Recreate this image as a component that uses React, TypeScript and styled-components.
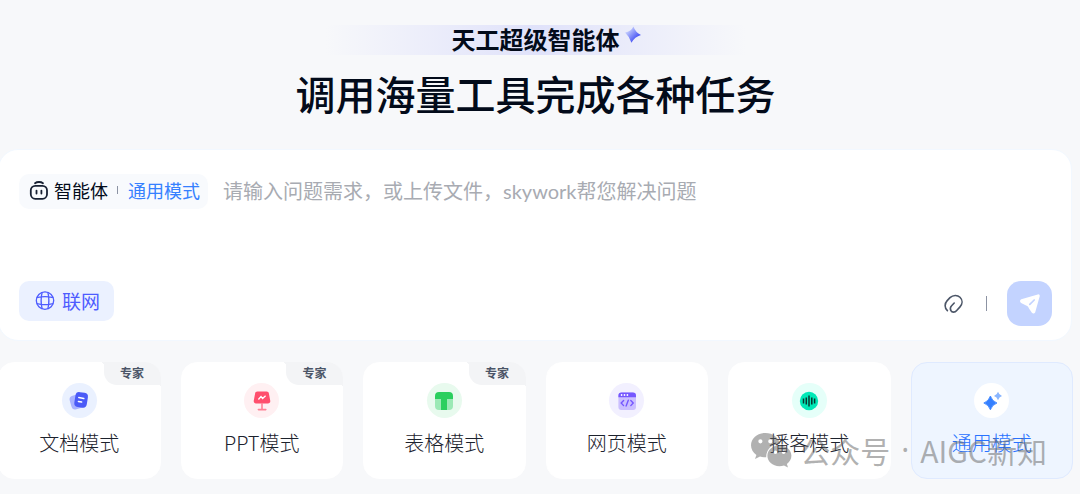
import React from "react";
import styled, { createGlobalStyle } from "styled-components";

const GlobalStyle = createGlobalStyle`
  * { box-sizing: border-box; }
  body {
    margin: 0;
    background: #f7f8fa;
    color: #2f3540;
    font-family: "Noto Sans CJK SC", sans-serif;
    overflow-x: hidden;
  }
  button, textarea { font: inherit; }
`;

const Page = styled.main`
  position: relative;
  padding: 25px 7px 15px 0;
  margin-left: -2px;
`;

const Header = styled.header`
  display: flex;
  flex-direction: column;
  align-items: center;
  gap: 8px;
  color: #030b1a;
`;

const Tagline = styled.p`
  display: flex;
  justify-content: center;
  width: 420px;
  height: 30px;
  margin: 0;
  font-size: 24px;
  font-weight: 700;
  line-height: 28px;
  background: linear-gradient(90deg, rgba(222, 224, 250, 0), #e0e2fa 50%, rgba(222, 224, 250, 0));
`;

const TaglineText = styled.span`
  position: relative;
`;

const Spark = styled.svg`
  position: absolute;
  left: 100%;
  top: 0;
  margin-left: 4px;
`;

const Title = styled.h1`
  margin: 0;
  font-size: 40px;
  font-weight: 500;
  line-height: 60px;
`;

const Composer = styled.form`
  display: flex;
  flex-direction: column;
  justify-content: space-between;
  min-height: 192px;
  margin-top: 26px;
  margin-right: 1px;
  padding: 24px 19px 14px 20px;
  border: 1px solid #f2f8ff;
  border-radius: 20px;
  background: #fff;
`;

const InputRow = styled.div`
  display: flex;
  align-items: flex-start;
  gap: 15px;
`;

const ModeChip = styled.div`
  display: flex;
  align-items: center;
  height: 35px;
  padding: 0 8px 3px 10px;
  border-radius: 10px;
  background: #f8fafd;
  font-size: 18px;
  line-height: 26px;
  color: #030b1a;
  white-space: nowrap;
`;

const ChipName = styled.span`
  margin-left: 5px;
`;

const Divider = styled.span<{ $tall?: boolean }>`
  width: 1px;
  height: ${(p) => (p.$tall ? 15 : 8)}px;
  background: #8c93a3;
`;

const ChipMode = styled.button`
  margin-left: 10px;
  padding: 0;
  border: 0;
  background: none;
  color: #3580ff;
`;

const ChipDivider = styled(Divider)`
  margin-left: 9px;
`;

const Prompt = styled.textarea`
  flex: 1;
  min-width: 0;
  height: 60px;
  padding: 2px 0 0;
  border: 0;
  outline: 0;
  resize: none;
  background: none;
  font-family: Lato, "Noto Sans CJK SC", sans-serif;
  font-size: 20px;
  line-height: 30px;
  color: #030b1a;
  &::placeholder { color: #a8abb2; opacity: 1; }
`;

const Toolbar = styled.div`
  display: flex;
  align-items: flex-start;
  justify-content: space-between;
`;

const WebButton = styled.button`
  display: flex;
  align-items: center;
  gap: 7px;
  height: 40px;
  padding: 0 14px 2px 16px;
  border: 0;
  border-radius: 10px;
  background: #ebf1ff;
  color: #4d5cff;
  font-size: 19px;
`;

const Actions = styled.div`
  display: flex;
  align-items: center;
  gap: 20px;
`;

const IconButton = styled.button`
  display: flex;
  padding: 0;
  border: 0;
  background: none;
  color: #4b5567;
`;

const SendButton = styled.button`
  display: flex;
  align-items: center;
  justify-content: center;
  width: 45px;
  height: 45px;
  padding: 0;
  border: 0;
  border-radius: 14px;
  background: #c3d3ff;
`;

const Modes = styled.nav`
  display: grid;
  grid-template-columns: repeat(6, 1fr);
  gap: 20px;
  margin-top: 21px;
`;

const ModeCard = styled.button<{ $active?: boolean }>`
  position: relative;
  display: flex;
  flex-direction: column;
  align-items: center;
  gap: 10px;
  min-height: 117px;
  padding: 20px 0 0;
  border: 1px solid ${(p) => (p.$active ? "#dfeaff" : "#fff")};
  border-radius: 16px;
  background: ${(p) => (p.$active ? "#eef5ff" : "#fff")};
  color: ${(p) => (p.$active ? "#2872ff" : "#1c222d")};
  font-size: 20px;
  font-weight: 300;
  line-height: 30px;
`;

const IconDisc = styled.span<{ $tint: string }>`
  display: flex;
  align-items: center;
  justify-content: center;
  width: 35px;
  height: 35px;
  border-radius: 50%;
  background: ${(p) => p.$tint};
`;

const Badge = styled.span`
  position: absolute;
  top: -1px;
  right: -1px;
  width: 57px;
  height: 23px;
  border-radius: 0 16px 0 13px;
  background: #f3f4f6;
  color: #4b5567;
  font-size: 12px;
  font-weight: 700;
  line-height: 22px;
  text-align: center;
  &::before, &::after {
    content: "";
    position: absolute;
    width: 4px;
    height: 4px;
    background: radial-gradient(circle at 0 100%, transparent 4px, #f3f4f6 4px);
  }
  &::before { right: 100%; top: 0; }
  &::after { right: 0; top: 100%; height: 3px; }
`;

const Watermark = styled.div`
  position: absolute;
  right: 33px;
  top: 428px;
  display: flex;
  align-items: center;
  gap: 8px;
  font-size: 30px;
  line-height: 44px;
  color: rgba(100, 100, 100, 0.5);
  white-space: nowrap;
  pointer-events: none;
`;

const WatermarkDot = styled.span`
  width: 14px;
  font-family: "Noto Sans", sans-serif;
  text-align: center;
`;

const RobotIcon = () => (
  <svg width="20" height="20" viewBox="0 0 20 20" fill="none" stroke="#172033" strokeWidth="1.8" strokeLinecap="round">
    <rect x="1.8" y="5.8" width="16.2" height="13" rx="4.5" />
    <path d="M6 3.2C8 1.6 12 1.6 14 3.2" />
    <path d="M7.5 10.6v3M12.4 10.6v3" />
  </svg>
);

const GlobeIcon = () => (
  <svg width="20" height="20" viewBox="0 0 20 20" fill="none" stroke="#4d5cff" strokeWidth="1.3">
    <circle cx="10" cy="10.6" r="8.7" />
    <path d="M7.2 2.2C5.8 7.6 5.8 13.6 7.2 19M12.8 2.2C14.2 7.6 14.2 13.6 12.8 19M1.8 7.6C7 6.4 13 6.4 18.2 7.6M1.8 13.6C7 14.8 13 14.8 18.2 13.6" />
  </svg>
);

const ClipIcon = () => (
  <svg width="22" height="20" viewBox="0 0 22 20" fill="none" stroke="currentColor" strokeWidth="1.6" strokeLinecap="round" strokeLinejoin="round">
    <path d="M3.4 16.6C.4 13.8.4 9.6 3.2 6.6L6 3.6C9 .9 13.4.7 16 3.3C18.8 6.1 18.6 10 16 12.9L12.7 16.5C11 18.7 7.8 18.6 6.9 16.6C6 14.8 6.2 13.1 7.6 11.7L10.2 9" />
  </svg>
);

const SendIcon = () => (
  <svg width="22" height="22" viewBox="0 0 22 22">
    <path d="M18.8 1.4C20 1.1 21 2 20.7 3.3L16.3 19.1C15.9 20.7 13.9 21.2 12.9 19.8L10 15.6C9.7 15.1 9.4 14.2 8.9 13.6C8.2 12.9 7.3 12.5 6.6 12.2L2.1 9.9C.6 9.1.7 6.9 2.3 6.3Z" fill="#fff" />
    <path d="M10.8 11.4L15.2 7" stroke="#c3d3ff" strokeWidth="1.7" strokeLinecap="round" />
  </svg>
);

const DocIcon = () => (
  <svg width="22" height="22" viewBox="0 0 22 22">
    <rect x="2.4" y="5" width="12.5" height="14" rx="4" transform="rotate(-16 8 12)" fill="#a9b3ff" />
    <rect x="6.8" y="2.4" width="12.6" height="15" rx="4" transform="rotate(9 13 10)" fill="#4a5af7" />
    <path d="M10.8 7.6l5 .9M10.4 11.4l3.2.6" stroke="#fff" strokeWidth="1.5" strokeLinecap="round" />
  </svg>
);

const SlidesIcon = () => (
  <svg width="22" height="22" viewBox="0 0 22 22">
    <path d="M6.4 1.5h9.2c1.3 0 2 .7 2.3 1.9l1.3 7.2c.4 1.7-.6 2.9-2.3 2.9H5.1c-1.7 0-2.7-1.2-2.3-2.9l1.3-7.2C4.4 2.2 5.1 1.5 6.4 1.5z" fill="#ff4f6d" />
    <path d="M7.4 9.5l2.6-3 1.6 2 3-2.8" fill="none" stroke="#fff" strokeWidth="1.3" />
    <path d="M11 13.5v6M7.4 19.6h7.4" stroke="#ff8296" strokeWidth="1.6" strokeLinecap="round" />
  </svg>
);

const SheetIcon = () => (
  <svg width="20" height="20" viewBox="0 0 20 20">
    <path d="M1 7h18v8a4 4 0 0 1-4 4H5a4 4 0 0 1-4-4z" fill="#9be9b5" />
    <path d="M5 1h10a4 4 0 0 1 4 4v3h-6v11H7V8H1V5a4 4 0 0 1 4-4z" fill="#2bcf5e" />
  </svg>
);

const WebIcon = () => (
  <svg width="20" height="20" viewBox="0 0 20 20">
    <rect x="1.4" y="1.5" width="17.6" height="17.5" rx="3" fill="#cbbfff" />
    <path d="M4.6 1.5h11.2A3.2 3.2 0 0 1 19 4.7v1.6H1.4V4.7a3.2 3.2 0 0 1 3.2-3.2z" fill="#7557ff" />
    <g fill="#fff"><circle cx="4.6" cy="4" r=".9" /><circle cx="7.5" cy="4" r=".9" /><circle cx="10.4" cy="4" r=".9" /></g>
    <path d="M6.6 9.6L4.2 12l2.4 2.6M13.8 9.6l2.4 2.4-2.4 2.6M11.3 9.2l-2.2 5.8" fill="none" stroke="#7557ff" strokeWidth="1.4" strokeLinecap="round" />
  </svg>
);

const PodcastIcon = () => (
  <svg width="20" height="20" viewBox="0 0 20 20">
    <circle cx="10" cy="10" r="9.2" fill="#00e8b7" />
    <path d="M4.5 7.4v5M7.3 6.4v7M10 4.6v10.8M12.8 6.4v7M15.6 7.4v5" stroke="#06352f" strokeWidth="1.5" />
  </svg>
);

const SparklesIcon = () => (
  <svg width="22" height="22" viewBox="0 0 22 22">
    <path d="M9.4 6Q11 11.2 16 13Q11 14.8 9.4 19.8Q7.8 14.8 2.8 13Q7.8 11.2 9.4 6z" fill="#3580ff" stroke="#3580ff" strokeWidth=".8" strokeLinejoin="round" />
    <path d="M17 1.8Q18 5 21 6Q18 7 17 10.2Q16 7 13 6Q16 5 17 1.8z" fill="#8ab6ff" />
  </svg>
);

const WeChatIcon = () => (
  <svg width="42" height="36" viewBox="0 0 42 36">
    <path fill="currentColor" fillRule="evenodd" d="M15.5 1C7.3 1 1 6.4 1 13.3c0 4 2.1 7.3 5.4 9.6L5 27l5-2.6c2 .6 4 .9 6.2.9C16 17.4 21.9 11.8 30.2 12C28.7 5.5 22.6 1 15.5 1zM10.4 7.2a2.1 2.1 0 1 1 0 4.2 2.1 2.1 0 0 1 0-4.2zM20.3 7.2a2.1 2.1 0 1 1 0 4.2 2.1 2.1 0 0 1 0-4.2z" />
    <path fill="currentColor" fillRule="evenodd" d="M29.4 13.4c-7 0-12 4.7-12 10.4s5 10.4 12 10.4c1.7 0 3.2-.3 4.6-.8l4 2-1.1-3.5c2.7-1.9 4.5-4.8 4.5-8.1 0-5.7-5-10.4-12-10.4zM25.4 18.5a1.8 1.8 0 1 1 0 3.6 1.8 1.8 0 0 1 0-3.6zM33.6 18.5a1.8 1.8 0 1 1 0 3.6 1.8 1.8 0 0 1 0-3.6z" />
  </svg>
);

const modes = [
  { label: "文档模式", tint: "#eaf1ff", Icon: DocIcon, expert: true },
  { label: "PPT模式", tint: "#fff0f2", Icon: SlidesIcon, expert: true },
  { label: "表格模式", tint: "#e8faee", Icon: SheetIcon, expert: true },
  { label: "网页模式", tint: "#f2f0ff", Icon: WebIcon },
  { label: "播客模式", tint: "#e5fff9", Icon: PodcastIcon },
  { label: "通用模式", tint: "#fff", Icon: SparklesIcon, active: true },
];

export default function App() {
  return (
    <>
      <GlobalStyle />
      <Page>
        <Header>
          <Tagline>
            <TaglineText>
              天工超级智能体
              <Spark width="18" height="20" viewBox="0 0 18 20">
                <defs>
                  <linearGradient id="spark" x1="0" y1="0" x2="1" y2="1">
                    <stop offset="0.15" stopColor="#d3dcff" />
                    <stop offset="0.7" stopColor="#4f5bf5" />
                  </linearGradient>
                </defs>
                <path d="M9.4 1.4Q11.4 7.2 17 10Q10.8 11.8 7.4 17.8Q5.6 11.8 1 7.6Q7.2 6.4 9.4 1.4z" fill="url(#spark)" />
              </Spark>
            </TaglineText>
          </Tagline>
          <Title>调用海量工具完成各种任务</Title>
        </Header>

        <Composer onSubmit={(e) => e.preventDefault()}>
          <InputRow>
            <ModeChip>
              <RobotIcon />
              <ChipName>智能体</ChipName>
              <ChipDivider />
              <ChipMode type="button">通用模式</ChipMode>
            </ModeChip>
            <Prompt aria-label="问题需求" placeholder="请输入问题需求，或上传文件，skywork帮您解决问题" />
          </InputRow>
          <Toolbar>
            <WebButton type="button">
              <GlobeIcon />
              联网
            </WebButton>
            <Actions>
              <IconButton type="button" aria-label="上传文件">
                <ClipIcon />
              </IconButton>
              <Divider $tall />
              <SendButton type="submit" aria-label="发送">
                <SendIcon />
              </SendButton>
            </Actions>
          </Toolbar>
        </Composer>

        <Modes>
          {modes.map(({ label, tint, Icon, expert, active }) => (
            <ModeCard key={label} type="button" $active={active}>
              {expert && <Badge>专家</Badge>}
              <IconDisc $tint={tint}>
                <Icon />
              </IconDisc>
              {label}
            </ModeCard>
          ))}
        </Modes>

        <Watermark>
          <WeChatIcon />
          <span>公众号</span>
          <WatermarkDot>·</WatermarkDot>
          <span>AIGC新知</span>
        </Watermark>
      </Page>
    </>
  );
}
